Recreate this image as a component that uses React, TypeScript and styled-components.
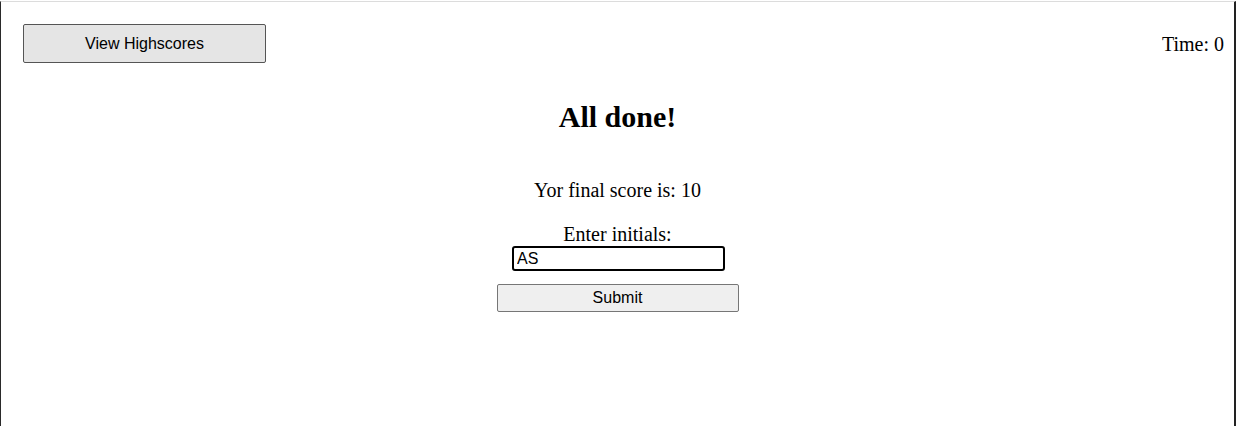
import React, { useState } from "react";
import styled, { createGlobalStyle } from "styled-components";

const GlobalStyle = createGlobalStyle`
  html, body {
    margin: 0;
    padding: 0;
    background: #ffffff;
  }
  body {
    padding-top: 1px;
    font-family: "Liberation Serif", "Times New Roman", serif;
    color: #000;
  }
`;

const Frame = styled.div`
  box-sizing: border-box;
  height: 425px;
  border-top: 1px solid #dcdcdc;
  border-left: 1px solid #2a2a2a;
  border-right: 2px solid #222;
  display: flex;
  flex-direction: column;
`;

const Header = styled.header`
  display: flex;
  justify-content: space-between;
  align-items: center;
  padding: 22px 10px 0 22px;
`;

const HighscoresButton = styled.button`
  width: 243px;
  height: 39px;
  background: #e5e5e5;
  border: 1px solid #555;
  border-radius: 2px;
  font-family: "Liberation Sans", Arial, sans-serif;
  font-size: 16px;
  color: #000;
  padding: 0;
  cursor: pointer;
`;

const Timer = styled.span`
  font-size: 20px;
  line-height: 24px;
`;

const Main = styled.main`
  display: flex;
  flex-direction: column;
  align-items: center;
`;

const Title = styled.h1`
  margin: 37px 0 0;
  font-size: 30px;
  line-height: 34px;
  font-weight: bold;
`;

const Score = styled.p`
  margin: 44px 0 0;
  font-size: 20px;
  line-height: 24px;
`;

const InitialsForm = styled.form`
  margin-top: 20px;
  display: flex;
  flex-direction: column;
  align-items: center;
`;

const Label = styled.label`
  font-size: 20px;
  line-height: 24px;
`;

const InitialsInput = styled.input`
  box-sizing: border-box;
  width: 213px;
  height: 25px;
  margin: 0 0 0 2px;
  padding: 1px 3px;
  border: 2px solid #000;
  border-radius: 3px;
  font-family: "Liberation Sans", Arial, sans-serif;
  font-size: 16px;
  color: #000;
  outline: none;
`;

const SubmitButton = styled.button`
  box-sizing: border-box;
  width: 242px;
  height: 28px;
  margin-top: 13px;
  background: #efefef;
  border: 1px solid #767676;
  border-radius: 2px;
  font-family: "Liberation Sans", Arial, sans-serif;
  font-size: 16px;
  color: #000;
  padding: 0;
  cursor: pointer;
`;

export default function App() {
  const [initials, setInitials] = useState("AS");

  return (
    <>
      <GlobalStyle />
      <Frame>
        <Header>
          <HighscoresButton type="button">View Highscores</HighscoresButton>
          <Timer>Time: 0</Timer>
        </Header>
        <Main>
          <Title>All done!</Title>
          <Score>Yor final score is: 10</Score>
          <InitialsForm onSubmit={(e) => e.preventDefault()}>
            <Label htmlFor="initials">Enter initials:</Label>
            <InitialsInput
              id="initials"
              value={initials}
              autoFocus
              onChange={(e) => setInitials(e.target.value)}
            />
            <SubmitButton type="submit">Submit</SubmitButton>
          </InitialsForm>
        </Main>
      </Frame>
    </>
  );
}
